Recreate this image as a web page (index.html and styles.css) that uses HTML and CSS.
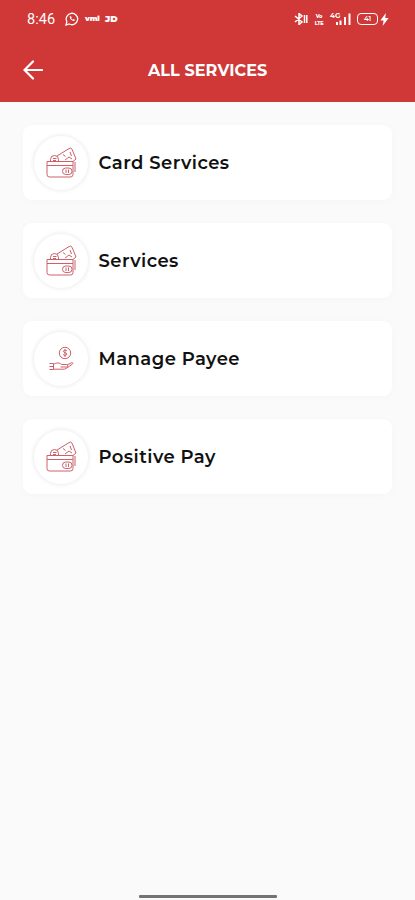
FILE: index.html
```
<!DOCTYPE html>
<html lang="en">
<head>
    <meta charset="utf-8">
    <meta name="viewport" content="width=device-width, initial-scale=1">
    <title>All Services</title>
    <link rel="stylesheet" href="styles.css">
</head>
<body>
    <svg class="symbols" aria-hidden="true">
        <symbol id="wallet" viewBox="0 0 32 32">
            <path d="M2 14.5h26v13a2.5 2.5 0 0 1-2.5 2.5h-21A2.5 2.5 0 0 1 2 27.5zM2 18.5h26M12 9l12-7.4a2 2 0 0 1 3 .6L31 12l-3 2.5M18 7.5l2.5 2M25 5l1.5 4M20 13l4-3 3 2"/>
            <path d="M5.5 14v-1.5a4 4 0 1 1 8 0V14M8 11.5h3.5M8 13.5h3"/>
            <rect x="17.5" y="21" width="9.5" height="6.5" rx="3.2"/>
            <path d="M21 22.5v3.5M23.5 22.5v3.5M30 15v10"/>
        </symbol>
        <symbol id="payee" viewBox="0 0 32 32">
            <circle cx="20" cy="10" r="5.7"/>
            <path d="M22 8c-1-1.6-4-1-3.6.6.4 1.5 3.4.8 3.4 2.5 0 1.6-3 1.7-3.8.2M20 6v8"/>
            <path d="M4.500 20.500h4v6H4.500M4.500 23.500h4M8.500 21.500c3-2 6-2 8 0h5c1.500 0 1.500 2.500 0 2.500h-6M22 22l4.500-2.300c1.500-.5 1.700.8.7 1.600L21 25.500c-1 .7-2 .7-3 .7H8.500"/>
        </symbol>
    </svg>

    <header class="header">
        <div class="status-bar">
            <span class="time">8:46</span>
            <svg class="whatsapp" viewBox="0 0 14 14"><path d="M1 13l.9-3.3A5.7 5.700 0 1 1 4.200 12z"/><path d="M4.800 4.300c-.7 2.200 2.300 5 4.500 4.800l.6-1.300-1.500-.7-.8.7-1.500-1.600.6-.7-.7-1.300z" fill="#fff" stroke="none"/></svg>
            <span class="notice vmi">vmi</span>
            <span class="notice jd">JD</span>
            <div class="status-right">
                <svg class="bluetooth" viewBox="0 0 14 12"><path d="M1 3l7 6-3 2.500V.5L8 3 1 9M10.500 2v8M12.800 2v8"/></svg>
                <div class="stacked"><span>Vo</span><span>LTE</span></div>
                <svg class="signal" viewBox="0 0 23 14"><text x="1" y="6">4G</text><path d="M8 13v-3M11.500 13V8.500M16 13V5M20.500 13V1.500"/></svg>
                <span class="battery">41</span>
                <svg class="bolt" viewBox="0 0 9 14"><path d="M6 0L0 8h3.500L2.500 14 9 5.500H5.300z"/></svg>
            </div>
        </div>
        <div class="title-bar">
            <svg class="back" viewBox="0 0 20 20"><path d="M19 10H1.500M10 1.500L1.500 10l8.500 8.500"/></svg>
            <h1>ALL SERVICES</h1>
        </div>
    </header>

    <main class="services">
        <div class="card">
            <div class="icon"><svg><use href="#wallet"/></svg></div>
            <span class="label">Card Services</span>
        </div>
        <div class="card">
            <div class="icon"><svg><use href="#wallet"/></svg></div>
            <span class="label">Services</span>
        </div>
        <div class="card">
            <div class="icon"><svg><use href="#payee"/></svg></div>
            <span class="label">Manage Payee</span>
        </div>
        <div class="card">
            <div class="icon"><svg><use href="#wallet"/></svg></div>
            <span class="label">Positive Pay</span>
        </div>
    </main>

    <div class="home-bar"></div>
</body>
</html>
```
FILE: styles.css
```
* {
    box-sizing: border-box;
}
body {
    margin: 0;
    height: 900px;
    display: flex;
    flex-direction: column;
    background-color: #fafafa;
    font-family: Montserrat, Inter, sans-serif;
    overflow: hidden;
}
svg {
    display: block;
    fill: none;
    stroke: #fff;
}
.symbols {
    display: none;
}
.header {
    height: 102px;
    background-color: #d03737;
    color: #fff;
}
.status-bar {
    height: 38px;
    padding: 0 26px 0 27px;
    display: flex;
    align-items: center;
}
.time {
    width: 38px;
    font: 400 14.5px Roboto, sans-serif;
    letter-spacing: 0.1px;
}
.whatsapp {
    width: 14px;
    height: 14px;
    stroke-width: 1.3;
}
.notice {
    font-size: 8px;
    font-weight: 900;
    line-height: 10px;
}
.vmi {
    width: 15px;
    margin-left: 6px;
    font-size: 7.5px;
    letter-spacing: -0.2px;
}
.jd {
    margin-left: 5px;
    font-size: 9px;
}
.status-right {
    margin-left: auto;
    display: flex;
    align-items: center;
}
.bluetooth {
    width: 14px;
    height: 12px;
    stroke-width: 1.5;
}
.stacked {
    width: 10px;
    margin-left: 6px;
    display: flex;
    flex-direction: column;
    align-items: center;
    gap: 1px;
    font-size: 5px;
    font-weight: 800;
    line-height: 6px;
    letter-spacing: -0.2px;
}
.signal {
    width: 23px;
    height: 14px;
    margin-left: 5px;
    stroke-width: 2;
}
.signal text {
    fill: #fff;
    stroke: none;
    font-size: 7px;
    font-weight: 700;
}
.battery {
    width: 21px;
    height: 12px;
    margin-left: 5px;
    border: 1.5px solid #fff;
    border-radius: 4px;
    font-size: 7px;
    font-weight: 600;
    line-height: 10px;
    text-align: center;
}
.bolt {
    width: 9px;
    height: 13px;
    margin-left: 2px;
    fill: #fff;
    stroke: none;
}
.title-bar {
    height: 64px;
    padding-left: 23px;
    display: flex;
    align-items: center;
}
.back {
    width: 20px;
    height: 20px;
    stroke-width: 2.2;
    stroke-linecap: round;
}
.title-bar h1 {
    margin: 0 0 0 105px;
    font-size: 16px;
    font-weight: 700;
    letter-spacing: 0.08px;
}
.services {
    flex: 1;
    padding: 23px 23px 0;
    display: flex;
    flex-direction: column;
    gap: 23px;
}
.card {
    height: 75px;
    padding-left: 11px;
    display: flex;
    align-items: center;
    background-color: #fff;
    border-radius: 9px;
    box-shadow: 0 1px 8px rgba(0, 0, 0, 0.025);
}
.icon {
    width: 54px;
    height: 54px;
    display: flex;
    align-items: center;
    justify-content: center;
    border-radius: 50%;
    box-shadow: 0 0 4px 1px rgba(0, 0, 0, 0.08);
}
.icon svg {
    width: 32px;
    height: 32px;
    stroke: #cd6068;
    stroke-width: 1;
}
.label {
    margin: 0 0 0 10.5px;
    color: #111;
    font-size: 18px;
    font-weight: 600;
    letter-spacing: 0.45px;
}
.home-bar {
    width: 138px;
    height: 3px;
    margin: 0 auto 2px;
    background-color: #737373;
    border-radius: 1px;
}
```
